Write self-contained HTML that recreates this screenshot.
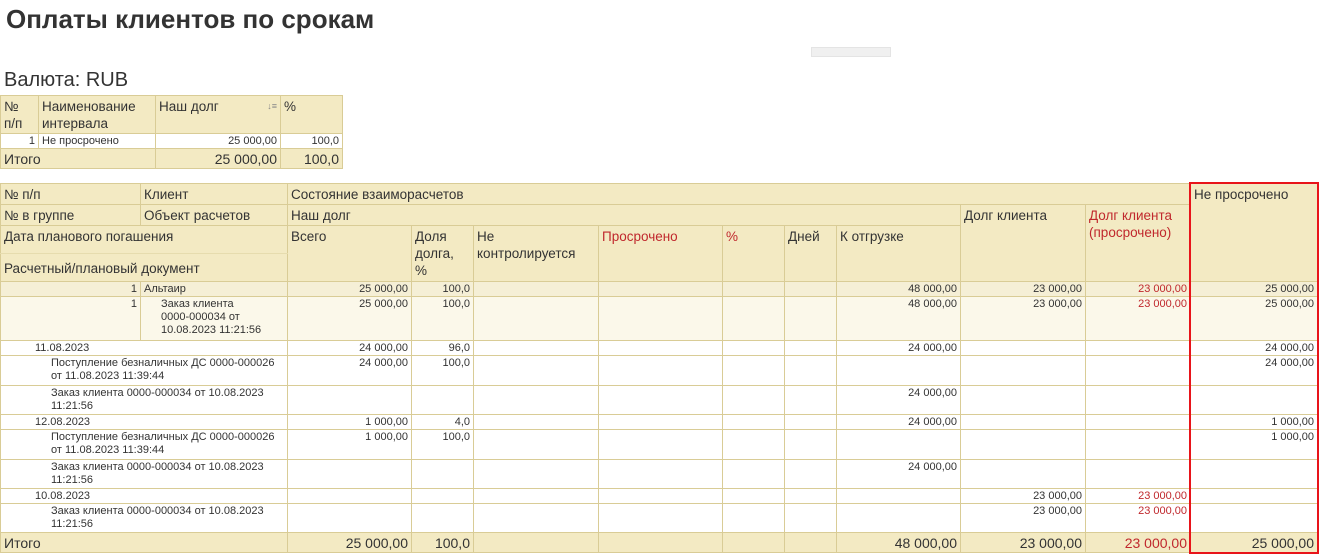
<!DOCTYPE html>
<html><head><meta charset="utf-8"><style>
body{margin:0;background:#fff;font-family:"Liberation Sans",sans-serif;color:#333;width:1321px;height:553px;overflow:hidden;position:relative}
.t{position:absolute;left:6px;top:4px;font-size:26px;font-weight:bold;color:#333}
.v{position:absolute;left:4px;top:69px;font-size:20px;color:#333}
.bar{position:absolute;left:811px;top:47px;width:78px;height:8px;background:#f0f0f0;border:1px solid #e4e4e4}
table{border-collapse:collapse;table-layout:fixed;position:absolute}
td{border:1px solid #d9cc96;padding:0 3px;vertical-align:top;overflow:hidden;white-space:nowrap}
.h td{background:#f3eac3;font-size:13.5px;line-height:17px;padding-top:2px}
.r{text-align:right}
.red{color:#c0282d}
.d td{font-size:11px;line-height:13px;padding-top:1px}
.a td{background:#f5efd6}
.z td{background:#fbf8ea}
.w td{background:#fff}
.it td{background:#f3eac3;font-size:14px;line-height:17px;padding-top:2px}
#box{position:absolute;left:1189px;top:182px;width:126px;height:368px;border:2px solid #e8141a}
</style></head><body>
<div class="t">Оплаты клиентов по срокам</div>
<div class="bar"></div>
<div class="v">Валюта: RUB</div>

<table style="left:0;top:95px;width:342px">
<colgroup><col style="width:38px"><col style="width:117px"><col style="width:125px"><col style="width:62px"></colgroup>
<tr class="h" style="height:38px"><td style="white-space:normal">№<br>п/п</td><td>Наименование<br>интервала</td><td>Наш долг<span style="float:right;font-size:9px;color:#888">↓≡</span></td><td>%</td></tr>
<tr class="d w" style="height:15px"><td class="r">1</td><td>Не просрочено</td><td class="r">25 000,00</td><td class="r">100,0</td></tr>
<tr class="it" style="height:20px"><td colspan="2">Итого</td><td class="r">25 000,00</td><td class="r">100,0</td></tr>
</table>

<table style="left:0;top:183px;width:1317px">
<colgroup><col style="width:140px"><col style="width:147px"><col style="width:124px"><col style="width:62px"><col style="width:125px"><col style="width:124px"><col style="width:62px"><col style="width:52px"><col style="width:124px"><col style="width:125px"><col style="width:105px"><col style="width:127px"></colgroup>
<tr class="h" style="height:21px"><td>№ п/п</td><td>Клиент</td><td colspan="9">Состояние взаиморасчетов</td><td rowspan="4">Не просрочено</td></tr>
<tr class="h" style="height:21px"><td>№ в группе</td><td>Объект расчетов</td><td colspan="7">Наш долг</td><td rowspan="3">Долг клиента</td><td rowspan="3" class="red">Долг клиента<br>(просрочено)</td></tr>
<tr class="h" style="height:28px"><td colspan="2" style="border-bottom:1px solid #e6dcae">Дата планового погашения</td><td rowspan="2">Всего</td><td rowspan="2">Доля<br>долга,<br>%</td><td rowspan="2">Не<br>контролируется</td><td rowspan="2" class="red">Просрочено</td><td rowspan="2" class="red">%</td><td rowspan="2">Дней</td><td rowspan="2">К отгрузке</td></tr>
<tr class="h" style="height:28px"><td colspan="2" style="padding-top:6px">Расчетный/плановый документ</td></tr>

<tr class="d a" style="height:15px"><td class="r">1</td><td>Альтаир</td><td class="r">25 000,00</td><td class="r">100,0</td><td></td><td></td><td></td><td></td><td class="r">48 000,00</td><td class="r">23 000,00</td><td class="r red">23 000,00</td><td class="r">25 000,00</td></tr>
<tr class="d z" style="height:44px"><td class="r">1</td><td style="padding-left:20px">Заказ клиента<br>0000-000034 от<br>10.08.2023 11:21:56</td><td class="r">25 000,00</td><td class="r">100,0</td><td></td><td></td><td></td><td></td><td class="r">48 000,00</td><td class="r">23 000,00</td><td class="r red">23 000,00</td><td class="r">25 000,00</td></tr>
<tr class="d w" style="height:14px"><td colspan="2" style="padding-left:34px">11.08.2023</td><td class="r">24 000,00</td><td class="r">96,0</td><td></td><td></td><td></td><td></td><td class="r">24 000,00</td><td></td><td></td><td class="r">24 000,00</td></tr>
<tr class="d w" style="height:30px"><td colspan="2" style="padding-left:50px">Поступление безналичных ДС 0000-000026<br>от 11.08.2023 11:39:44</td><td class="r">24 000,00</td><td class="r">100,0</td><td></td><td></td><td></td><td></td><td></td><td></td><td></td><td class="r">24 000,00</td></tr>
<tr class="d w" style="height:29px"><td colspan="2" style="padding-left:50px">Заказ клиента 0000-000034 от 10.08.2023<br>11:21:56</td><td></td><td></td><td></td><td></td><td></td><td></td><td class="r">24 000,00</td><td></td><td></td><td></td></tr>
<tr class="d w" style="height:15px"><td colspan="2" style="padding-left:34px">12.08.2023</td><td class="r">1 000,00</td><td class="r">4,0</td><td></td><td></td><td></td><td></td><td class="r">24 000,00</td><td></td><td></td><td class="r">1 000,00</td></tr>
<tr class="d w" style="height:30px"><td colspan="2" style="padding-left:50px">Поступление безналичных ДС 0000-000026<br>от 11.08.2023 11:39:44</td><td class="r">1 000,00</td><td class="r">100,0</td><td></td><td></td><td></td><td></td><td></td><td></td><td></td><td class="r">1 000,00</td></tr>
<tr class="d w" style="height:29px"><td colspan="2" style="padding-left:50px">Заказ клиента 0000-000034 от 10.08.2023<br>11:21:56</td><td></td><td></td><td></td><td></td><td></td><td></td><td class="r">24 000,00</td><td></td><td></td><td></td></tr>
<tr class="d w" style="height:15px"><td colspan="2" style="padding-left:34px">10.08.2023</td><td></td><td></td><td></td><td></td><td></td><td></td><td></td><td class="r">23 000,00</td><td class="r red">23 000,00</td><td></td></tr>
<tr class="d w" style="height:29px"><td colspan="2" style="padding-left:50px">Заказ клиента 0000-000034 от 10.08.2023<br>11:21:56</td><td></td><td></td><td></td><td></td><td></td><td></td><td></td><td class="r">23 000,00</td><td class="r red">23 000,00</td><td></td></tr>
<tr class="it" style="height:20px"><td colspan="2">Итого</td><td class="r">25 000,00</td><td class="r">100,0</td><td></td><td></td><td></td><td></td><td class="r">48 000,00</td><td class="r">23 000,00</td><td class="r red">23 000,00</td><td class="r">25 000,00</td></tr>
</table>
<div id="box"></div>
</body></html>
